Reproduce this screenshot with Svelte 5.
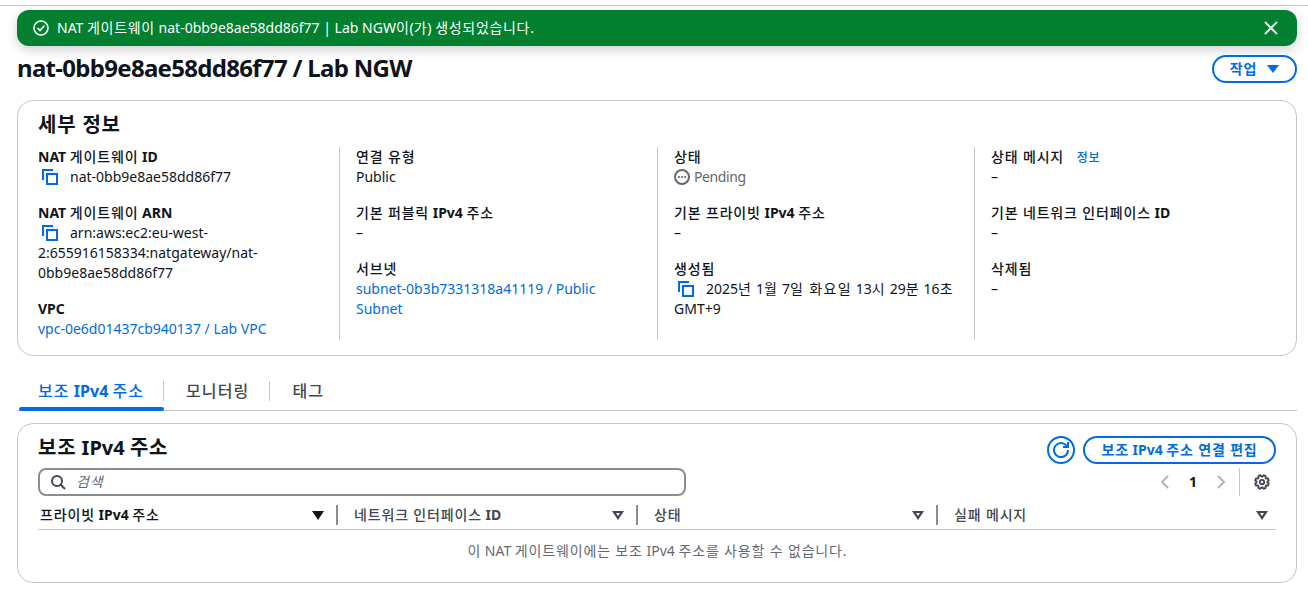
<script>
  const gear = (() => {
    // 8-tooth outline for the table preferences icon
    let pts = [];
    for (let i = 0; i < 8; i++) {
      const a = (i * Math.PI) / 4 + Math.PI / 8;
      for (const [r, o] of [[5.4, -0.3], [7, -0.17], [7, 0.17], [5.4, 0.3]]) {
        pts.push((8 + r * Math.cos(a + o)).toFixed(2) + "," + (8 + r * Math.sin(a + o)).toFixed(2));
      }
    }
    return pts.join(" ");
  })();

  // hangul sets wider and lighter than the latin text next to it
  const runs = (text) =>
    text
      .split(/([가-힣]+(?: [가-힣]+)*)/)
      .filter(Boolean)
      .map((t) => ({ t, ko: /[가-힣]/.test(t) }));

  const columns = [
    [
      { label: "NAT 게이트웨이 ID", copy: "nat-0bb9e8ae58dd86f77" },
      { label: "NAT 게이트웨이 ARN", copy: "arn:aws:ec2:eu-west-2:655916158334:natgateway/nat-0bb9e8ae58dd86f77" },
      { label: "VPC", link: "vpc-0e6d01437cb940137 / Lab VPC" },
    ],
    [
      { label: "연결 유형", text: "Public" },
      { label: "기본 퍼블릭 IPv4 주소", text: "–" },
      { label: "서브넷", link: "subnet-0b3b7331318a41119 / Public Subnet" },
    ],
    [
      { label: "상태", pending: "Pending" },
      { label: "기본 프라이빗 IPv4 주소", text: "–" },
      { label: "생성됨", copy: "2025년 1월 7일 화요일 13시 29분 16초 GMT+9" },
    ],
    [
      { label: "상태 메시지", info: "정보", text: "–" },
      { label: "기본 네트워크 인터페이스 ID", text: "–" },
      { label: "삭제됨", text: "–" },
    ],
  ];

  const headers = [
    { title: "프라이빗 IPv4 주소", sorted: true },
    { title: "네트워크 인터페이스 ID" },
    { title: "상태" },
    { title: "실패 메시지" },
  ];
</script>

{#snippet mixed(text)}{#each runs(text) as r}<span class:ko={r.ko}>{r.t}</span>{/each}{/snippet}

<div class="page">
  <div class="flash">
    <svg class="flash-icon" viewBox="0 0 16 16"><circle cx="8" cy="8" r="7" /><path d="M4.5 8l2.5 2.5 4.5-5" /></svg>
    <span class="flash-text">{@render mixed("NAT 게이트웨이 nat-0bb9e8ae58dd86f77 | Lab NGW이(가) 생성되었습니다.")}</span>
    <svg class="flash-close" viewBox="0 0 16 16"><path d="M2 2l12 12M14 2L2 14" /></svg>
  </div>

  <header class="title-row">
    <h1>nat-0bb9e8ae58dd86f77 / Lab NGW</h1>
    <button class="btn actions"><span>{@render mixed("작업")}</span><span class="caret"></span></button>
  </header>

  <section class="card details">
    <h2>{@render mixed("세부 정보")}</h2>
    <div class="grid">
      {#each columns as col}
        <div class="col">
          {#each col as item}
            <div class="item">
              <div class="label">
                {@render mixed(item.label)}
                {#if item.info}<a class="info" href="#info">{@render mixed(item.info)}</a>{/if}
              </div>
              {#if item.copy}
                <div class="value">
                  <svg class="copy" viewBox="0 0 16 16"><path d="M1 11V1h10" /><rect x="5" y="5" width="10" height="10" /></svg>{@render mixed(item.copy)}
                </div>
              {:else if item.link}
                <div class="value"><a href="#link">{item.link}</a></div>
              {:else if item.pending}
                <div class="value pending">
                  <svg viewBox="0 0 16 16"><circle cx="8" cy="8" r="7" /><path d="M4.8 8h.2M7.9 8h.2M11 8h.2" /></svg>
                  <span>{item.pending}</span>
                </div>
              {:else}
                <div class="value">{item.text}</div>
              {/if}
            </div>
          {/each}
        </div>
      {/each}
    </div>
  </section>

  <nav class="tabs">
    <span class="tab active">{@render mixed("보조 IPv4 주소")}</span>
    <span class="tab">{@render mixed("모니터링")}</span>
    <span class="tab">{@render mixed("태그")}</span>
  </nav>

  <section class="card table-card">
    <div class="table-head">
      <h2>{@render mixed("보조 IPv4 주소")}</h2>
      <div class="head-actions">
        <button class="btn round" aria-label="새로 고침">
          <svg viewBox="0 0 16 16"><path d="M10 5h5V0" /><path d="M15 8a7 7 0 1 1-.7-3" /></svg>
        </button>
        <button class="btn edit"><span>{@render mixed("보조 IPv4 주소 연결 편집")}</span></button>
      </div>
    </div>
    <div class="filter-row">
      <div class="search">
        <svg viewBox="0 0 16 16"><circle cx="7" cy="7" r="5" /><path d="M10.5 10.5L15 15" /></svg>
        <span>{@render mixed("검색")}</span>
      </div>
      <div class="pager">
        <svg class="chev" viewBox="0 0 16 16"><path d="M11 2L5 8l6 6" /></svg>
        <b>1</b>
        <svg class="chev" viewBox="0 0 16 16"><path d="M5 2l6 6-6 6" /></svg>
        <span class="pager-sep"></span>
        <svg class="gear" viewBox="0 0 16 16"><polygon points={gear} /><circle cx="8" cy="8" r="2.2" /></svg>
      </div>
    </div>
    <div class="thead">
      {#each headers as h}
        <div class="th" class:sorted={h.sorted}>
          <span class="th-title">{@render mixed(h.title)}</span>
          <span class="sort" class:filled={h.sorted}></span>
        </div>
      {/each}
    </div>
    <div class="empty">{@render mixed("이 NAT 게이트웨이에는 보조 IPv4 주소를 사용할 수 없습니다.")}</div>
  </section>
</div>

<style>
  :global(body) {
    margin: 0;
    background: #fff;
  }
  .page {
    font-family: "Noto Sans", "Noto Sans CJK KR", sans-serif;
    font-size: 14px;
    line-height: 20px;
    color: #0f141a;
    height: 591px;
    overflow: hidden;
    box-sizing: border-box;
    padding: 5px 11px 0 17px;
    position: relative;
  }
  .page::before {
    content: "";
    display: block;
    height: 1px;
    background: #c6c6cd;
    margin: 0 -11px 4px -17px;
  }
  a {
    color: #006ce0;
    text-decoration: none;
  }
  h1,
  h2 {
    margin: 0;
  }
  .ko {
    letter-spacing: 0.06em;
  }
  h2 .ko {
    letter-spacing: 0.04em;
  }
  .flash .ko {
    letter-spacing: 0.05em;
  }
  .tab .ko {
    letter-spacing: 0.07em;
  }
  .value .ko {
    letter-spacing: 0.1em;
  }
  .label .ko,
  .tab .ko,
  .th .ko {
    font-weight: 500;
  }
  .flash {
    height: 36px;
    background: #037f30;
    border-radius: 12px;
    color: #fff;
    display: flex;
    align-items: center;
    padding: 0 18px 0 16px;
    box-shadow: 0 4px 12px rgba(0, 7, 22, 0.18);
  }
  .flash-icon {
    width: 16px;
    height: 16px;
    margin-right: 8px;
    fill: none;
    stroke: #fff;
    stroke-width: 1.6;
  }
  .flash-text {
    flex: 1;
  }
  .flash-close {
    width: 16px;
    height: 16px;
    fill: none;
    stroke: #e6e6e6;
    stroke-width: 2;
  }
  .title-row {
    display: flex;
    justify-content: space-between;
    align-items: flex-start;
    height: 54px;
    padding-top: 9px;
    box-sizing: border-box;
  }
  h1 {
    font-size: 24px;
    line-height: 26px;
    font-weight: 700;
    letter-spacing: -0.7px;
  }
  .btn {
    font-family: inherit;
    font-size: 14px;
    font-weight: 700;
    color: #006ce0;
    background: #fff;
    border: 2px solid #006ce0;
    border-radius: 20px;
    height: 28px;
    padding: 0 16px;
    line-height: 20px;
    display: inline-flex;
    align-items: center;
    justify-content: center;
    box-sizing: border-box;
    white-space: nowrap;
  }
  .actions {
    width: 85px;
    gap: 10px;
    padding: 0;
  }
  .edit {
    width: 193px;
    padding: 0;
  }
  .caret {
    width: 0;
    height: 0;
    border-left: 6.5px solid transparent;
    border-right: 6.5px solid transparent;
    border-top: 8px solid #006ce0;
  }
  .card {
    border: 1px solid #c6c6cd;
    border-radius: 16px;
    background: #fff;
    box-sizing: border-box;
    padding: 0 20px;
  }
  h2 {
    font-size: 20px;
    line-height: 24px;
    font-weight: 700;
  }
  .details {
    height: 256px;
    padding-top: 12px;
  }
  .grid {
    display: grid;
    grid-template-columns: 302px 318px 317px 1fr;
    margin-top: 10px;
  }
  .col {
    border-right: 1px solid #c6c6cd;
    padding: 0 16px;
    box-sizing: border-box;
    height: 193px;
    display: flex;
    flex-direction: column;
    gap: 16px;
  }
  .col:first-child {
    padding-left: 0;
  }
  .col:last-child {
    border-right: 0;
  }
  .label {
    font-weight: 700;
    height: 20px;
  }
  .info {
    font-size: 12px;
    margin-left: 9px;
  }
  .copy {
    width: 16px;
    height: 16px;
    margin: 0 12px 0 4px;
    vertical-align: -3px;
    fill: none;
    stroke: #006ce0;
    stroke-width: 2;
  }
  .pending {
    color: #656871;
    display: flex;
    align-items: center;
    gap: 4px;
    letter-spacing: -0.4px;
  }
  .pending svg {
    width: 16px;
    height: 16px;
    fill: none;
    stroke: #656871;
    stroke-width: 2;
    stroke-linecap: round;
  }
  .tabs {
    display: flex;
    height: 55px;
    padding-top: 25px;
    box-sizing: border-box;
    border-bottom: 1px solid #c6c6cd;
    align-items: flex-start;
  }
  .tab {
    font-size: 16px;
    font-weight: 700;
    line-height: 20px;
    color: #424650;
    padding: 0 20px 0 22px;
    border-right: 1px solid #c6c6cd;
    height: 20px;
  }
  .tab:last-child {
    border-right: 0;
  }
  .tab.active {
    color: #006ce0;
    position: relative;
    margin-left: 2px;
    width: 145px;
    box-sizing: border-box;
    padding: 0 0 0 19px;
    white-space: nowrap;
  }
  .tab.active::after {
    content: "";
    position: absolute;
    left: 0;
    right: -1px;
    top: 26px;
    height: 4px;
    border-radius: 2px;
    background: #006ce0;
  }
  .table-card {
    margin-top: 12px;
    height: 160px;
    padding-top: 12px;
  }
  .table-head {
    display: flex;
    justify-content: space-between;
    align-items: flex-start;
  }
  .head-actions {
    display: flex;
    gap: 8px;
  }
  .round {
    width: 28px;
    padding: 0;
    border-radius: 50%;
  }
  .round svg {
    width: 16px;
    height: 16px;
    fill: none;
    stroke: #006ce0;
    stroke-width: 2;
  }
  .filter-row {
    display: flex;
    justify-content: space-between;
    margin-top: 4px;
    height: 33px;
  }
  .search {
    width: 648px;
    height: 28px;
    box-sizing: border-box;
    border: 2px solid #8c8c94;
    border-radius: 8px;
    display: flex;
    align-items: center;
    padding-left: 10px;
    gap: 10px;
    font-style: italic;
    color: #656871;
  }
  .search svg {
    width: 16px;
    height: 16px;
    fill: none;
    stroke: #424650;
    stroke-width: 2;
  }
  .pager {
    display: flex;
    align-items: center;
    height: 28px;
  }
  .pager b {
    width: 40px;
    text-align: center;
    color: #0f141a;
  }
  .chev {
    width: 16px;
    height: 16px;
    fill: none;
    stroke: #b4b4bb;
    stroke-width: 2;
  }
  .pager-sep {
    width: 1px;
    height: 28px;
    background: #c6c6cd;
    margin: 0 14px 0 10px;
  }
  .gear {
    width: 16px;
    height: 16px;
    margin-right: 6px;
    fill: none;
    stroke: #424650;
    stroke-width: 1.8;
    stroke-linejoin: round;
  }
  .thead {
    display: grid;
    grid-template-columns: 298px 300px 300px 1fr;
    border-bottom: 1px solid #c6c6cd;
    height: 29px;
    box-sizing: border-box;
    padding-top: 4px;
  }
  .th {
    display: flex;
    align-items: center;
    justify-content: space-between;
    height: 20px;
    padding: 0 12px 0 16px;
    font-weight: 700;
    color: #424650;
    border-left: 2px solid #8c8c94;
    box-sizing: border-box;
  }
  .th:first-child {
    padding-left: 2px;
    color: #0f141a;
    border-left: 0;
  }
  .th:last-child {
    padding-right: 8px;
  }
  .sort {
    width: 0;
    height: 0;
    border-left: 6px solid transparent;
    border-right: 6px solid transparent;
    border-top: 9px solid #424650;
    position: relative;
  }
  .sort:not(.filled)::after {
    content: "";
    position: absolute;
    left: -2px;
    top: -7px;
    border-left: 2px solid transparent;
    border-right: 2px solid transparent;
    border-top: 3px solid #fff;
  }
  .sort.filled {
    border-top-color: #0f141a;
  }
  .empty {
    text-align: center;
    color: #656871;
    margin-top: 11px;
  }
</style>
